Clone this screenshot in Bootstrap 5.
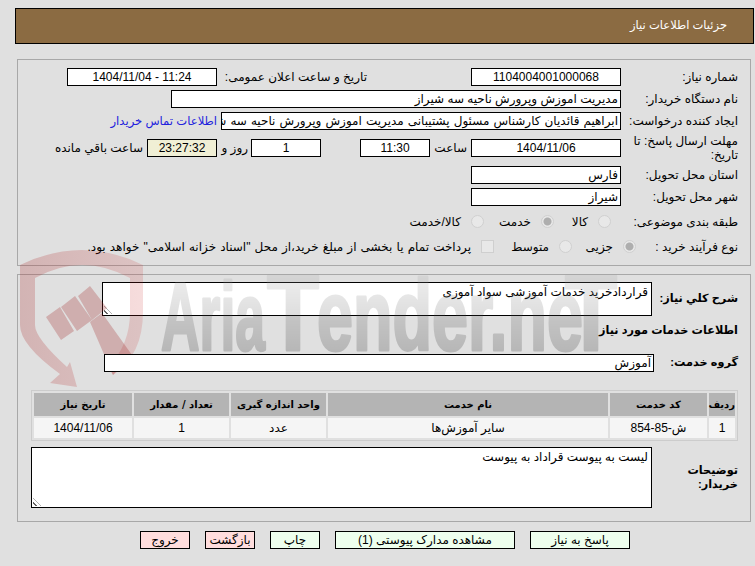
<!DOCTYPE html>
<html lang="fa" dir="rtl">
<head>
<meta charset="utf-8">
<title>جزئیات اطلاعات نیاز</title>
<link href="https://cdn.jsdelivr.net/npm/bootstrap@5.3.0/dist/css/bootstrap.min.css" rel="stylesheet">
<style>
html,body{height:566px;overflow:hidden}
body{background:#e0e0e0;color:#000;font-family:"Liberation Sans","DejaVu Sans",sans-serif;font-size:12px;line-height:1.2;position:relative}
.page{padding:8px 1px 0 0}
.head-bar{height:36px;margin-left:15px;background:#8b6b42;border:1px solid #000;color:#fff;padding:0 26px;display:flex;align-items:center;font-size:11.5px}
.panel-a,.panel-b{margin:0 3px 0 17px;border:1px solid #a8a8a8}
.panel-a{margin-top:15px;height:207px;padding:8px 12px 0 0}
.panel-b{margin-top:8px;height:248px;padding:7px 12px 0 0}
.frow{display:flex;align-items:center;height:18px;margin-bottom:4px}
.gap9{margin-bottom:9px}
.gap7{margin-bottom:7px}
.lab{width:117px;flex:none}
.fld{height:18px;border:1px solid #000;background:#fff;flex:none;padding:0 2px;white-space:nowrap;overflow:hidden;line-height:16px}
.over-mark{position:relative;z-index:2}
.wide-words{word-spacing:.7px}
.ctr{text-align:center}
.w150{width:150px}.w450{width:450px}.w400{width:400px}.w70{width:70px}
.w550{width:550px}.w621{width:621px}
.tall34{height:34px}.tall61{height:61px}
.wait{background:#f0efd5}
.pub-lab{width:150px;margin-right:104px;flex:none}
.hour-lab{width:41px;flex:none;padding-right:4px}
.day-field{margin-right:39px}
.day-lab{width:34px;flex:none;padding-right:3px}
.left-lab{padding-right:4px;flex:none}
.link-b{color:#2222dd;text-decoration:none;padding-right:4px;flex:none;font-size:11.6px}
.radio-i{width:13px;height:13px;border-radius:50%;border:1px solid #d0d0d0;background:#e8e8e8;flex:none}
.radio-i.on{background:radial-gradient(circle,#aeaeae 0 3.5px,#e8e8e8 4.5px)}
.check-i{width:13px;height:13px;border:1px solid #cfcfcf;background:#e8e8e8;flex:none}
.opt{display:flex;align-items:center;gap:10px;flex:none}
.lab-a{width:127px}
.lab-b{width:102px}
.o57{width:57px}.o70{width:70px}.o64{width:64px}.o78{width:78px}
.note-words{word-spacing:.8px}
.lbl-b{font-weight:700;font-size:11.3px;flex:none}
.w86{width:86px}.w84{width:84px}
.ta{border:1px solid #000;background:#fff;position:relative;flex:none;padding:2px 3px;line-height:15px}
.ta::after{content:"";position:absolute;left:1px;bottom:1px;width:8px;height:8px;background:repeating-linear-gradient(45deg,#fff 0 2px,#666 2px 3px);clip-path:polygon(0 0,0 100%,100% 100%)}
.top-row{display:flex;align-items:center;height:34px}
.sec-title{font-weight:700;font-size:11.3px;height:38px;line-height:28px}
.tbl{width:707px;border-collapse:separate;border-spacing:2px;border:1px solid #ccc;table-layout:fixed;font-size:12px;margin-top:18px}
.tbl th{background:#b4b4b4;height:23px;text-align:center;font-size:10px;padding:0;font-family:"DejaVu Sans",sans-serif}
.tbl td{background:#f5f5f5;height:20px;text-align:center;padding:0}
.c26{width:26px}.c97{width:97px}.c280{width:280px}.c95{width:95px}.c98{width:98px}
.bottom-row{display:flex;align-items:center;height:61px;margin-top:6px}
.btns{display:flex;gap:15px;margin:9px 124px 0 0}
.act{height:18px;border:1px solid #000;text-align:center;padding:0;font-size:12px;line-height:14px;color:#000;border-radius:0;flex:none}
.act-g{background:#eeffee}
.act-r{background:#ffdddd}
.b50{width:50px}.b100{width:100px}.b180{width:180px}
.wm{position:absolute;left:0;top:0;z-index:1;pointer-events:none}
.wm-t{font-family:"Liberation Sans",sans-serif;font-weight:700;direction:ltr}
</style>
</head>
<body>
<svg class="wm" width="755" height="566" viewBox="0 0 755 566" aria-hidden="true">
<defs>
<linearGradient id="wg" x1="0" y1="270" x2="0" y2="352" gradientUnits="userSpaceOnUse"><stop offset="0" stop-color="#b0b0b0"/><stop offset="1" stop-color="#000"/></linearGradient>
<linearGradient id="sg" x1="20" y1="0" x2="143" y2="0" gradientUnits="userSpaceOnUse"><stop offset="0" stop-color="#a82828" stop-opacity=".24"/><stop offset="1" stop-color="#c82828" stop-opacity=".16"/></linearGradient>
</defs>
<path d="M20 265Q82 235 143 265V312Q143 355 113 375L108 367Q130 345 130 312V278Q82 252 35 278V325Q35 338 67 367L70 362L77 387L50 383L60 374Q20 345 20 325Z" fill="url(#sg)"/>
<path d="M46 317L60 307L74 331L61 340ZM61 307L75 296L92 320L77 331ZM78 296L90 286L107 308L92 320ZM90 322L102 313L132 355L113 375Z" fill="#a02020" fill-opacity=".26"/>
<g class="wm-t" fill="url(#wg)" stroke="url(#wg)" stroke-width="3" stroke-linejoin="round" opacity=".18">
<text x="161" y="350" font-size="96" textLength="104" lengthAdjust="spacingAndGlyphs">Aria</text>
<text x="267" y="350" font-size="108" textLength="52" lengthAdjust="spacingAndGlyphs">T</text>
<text x="317" y="350" font-size="100" textLength="266" lengthAdjust="spacingAndGlyphs">ender.ne</text>
<text x="565" y="350" font-size="108" textLength="52" lengthAdjust="spacingAndGlyphs">T</text>
</g>
</svg>
<div class="page">
<div class="head-bar">جزئیات اطلاعات نیاز</div>

<div class="panel-a">
<div class="frow"><span class="lab">شماره نیاز:</span><span class="fld w150 ctr">1104004001000068</span><span class="pub-lab">تاریخ و ساعت اعلان عمومی:</span><span class="fld w150 ctr">11:24 - 1404/11/04</span></div>
<div class="frow"><span class="lab">نام دستگاه خریدار:</span><span class="fld w450">مدیریت اموزش وپرورش ناحیه سه شیراز</span></div>
<div class="frow gap9"><span class="lab">ایجاد کننده درخواست:</span><span class="fld w400 wide-words">ابراهیم قائدیان کارشناس مسئول پشتیبانی مدیریت اموزش وپرورش ناحیه سه شیراز</span><a class="link-b" href="#">اطلاعات تماس خریدار</a></div>
<div class="frow gap9"><span class="lab">مهلت ارسال پاسخ: تا تاریخ:</span><span class="fld w150 ctr">1404/11/06</span><span class="hour-lab text-nowrap">ساعت</span><span class="fld w70 ctr">11:30</span><span class="fld w70 ctr day-field">1</span><span class="day-lab text-nowrap">روز و</span><span class="fld w70 ctr wait">23:27:32</span><span class="left-lab">ساعت باقي مانده</span></div>
<div class="frow"><span class="lab">استان محل تحویل:</span><span class="fld w150">فارس</span></div>
<div class="frow gap7"><span class="lab">شهر محل تحویل:</span><span class="fld w150">شیراز</span></div>
<div class="frow gap7"><span class="lab lab-a">طبقه بندی موضوعی:</span>
<span class="opt o57"><span class="radio-i"></span><span>کالا</span></span>
<span class="opt o70"><span class="radio-i on"></span><span>خدمت</span></span>
<span class="opt"><span class="radio-i"></span><span>کالا/خدمت</span></span></div>
<div class="frow"><span class="lab lab-b">نوع فرآیند خرید :</span>
<span class="opt o64"><span class="radio-i on"></span><span>جزیی</span></span>
<span class="opt o78"><span class="radio-i"></span><span>متوسط</span></span>
<span class="opt"><span class="check-i"></span><span class="note-words">پرداخت تمام یا بخشی از مبلغ خرید،از محل "اسناد خزانه اسلامی" خواهد بود.</span></span></div>
</div>

<div class="panel-b">
<div class="top-row"><span class="lbl-b w86">شرح کلي نياز:</span><div class="ta w550 tall34">قراردادخرید خدمات آموزشی سواد آموزی</div></div>
<div class="sec-title">اطلاعات خدمات مورد نياز</div>
<div class="frow"><span class="lbl-b w84">گروه خدمت:</span><span class="fld w550 over-mark">آموزش</span></div>
<table class="tbl">
<colgroup><col class="c26"><col class="c97"><col class="c280"><col class="c95"><col class="c95"><col class="c98"></colgroup>
<thead><tr><th>ردیف</th><th>کد خدمت</th><th>نام خدمت</th><th>واحد اندازه گیری</th><th>تعداد / مقدار</th><th>تاریخ نیاز</th></tr></thead>
<tbody><tr><td>1</td><td>ش-85-854</td><td>سایر آموزش‌ها</td><td>عدد</td><td>1</td><td>1404/11/06</td></tr></tbody>
</table>
<div class="bottom-row"><span class="lbl-b w86">توضیحات خریدار:</span><div class="ta w621 tall61">لیست به پیوست قراداد به پیوست</div></div>
</div>

<div class="btns">
<button class="act act-g b100" type="button">پاسخ به نیاز</button>
<button class="act act-g b180" type="button">مشاهده مدارک پیوستی (1)</button>
<button class="act act-g b50" type="button">چاپ</button>
<button class="act act-r b50" type="button">بازگشت</button>
<button class="act act-r b50" type="button">خروج</button>
</div>
</div>
</body>
</html>
